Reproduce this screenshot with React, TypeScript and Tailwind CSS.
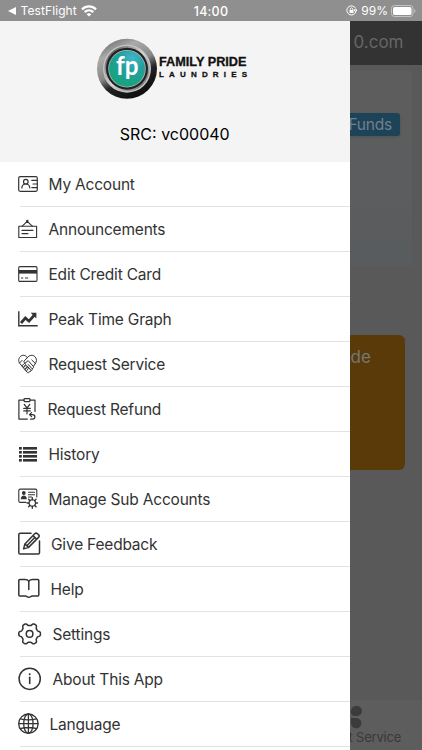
import type { ReactNode } from "react"

// outline of a cog with six soft teeth
const cogPoints = Array.from({ length: 120 }, (_, i) => {
  const a = (i / 120) * Math.PI * 2
  const r = 9.6 + 1.3 * Math.tanh(2 * Math.cos(6 * a))
  return `${(11.6 + r * Math.cos(a)).toFixed(2)},${(11.9 + r * Math.sin(a)).toFixed(2)}`
}).join(" ")

const menuItems: { label: string; text: string; icon: ReactNode }[] = [
  {
    label: "My Account",
    text: "ml-[6.5px]",
    icon: (
      <g strokeWidth="1.2">
        <rect x="0.7" y="4.7" width="18.6" height="14.6" rx="1.5" />
        <circle cx="7.8" cy="9.7" r="2.3" />
        <path d="M3.8 16c.2-2.5 1.8-4 4-4s3.8 1.5 4 4M13.8 8.4h5M15 12h4M13.8 15.6h5" />
      </g>
    ),
  },
  {
    label: "Announcements",
    text: "ml-[6.5px]",
    icon: (
      <g strokeWidth="1.1">
        <rect x="0.8" y="9.3" width="17.8" height="11.2" />
        <path d="M4 9.3l5.2-5 5.4 5M4 13.4h11M4 16.6h6" />
        <circle cx="9.3" cy="4" r="1.2" fill="#333" stroke="none" />
      </g>
    ),
  },
  {
    label: "Edit Credit Card",
    text: "ml-[6.5px]",
    icon: (
      <g>
        <rect x="0.7" y="4.6" width="18.3" height="14.8" rx="1.2" strokeWidth="1.1" />
        <path d="M.7 9.8h18.3" strokeWidth="3.6" strokeLinecap="butt" />
        <path d="M3 16h2.2M7 16h3.2" strokeWidth="1" strokeLinecap="butt" />
      </g>
    ),
  },
  {
    label: "Peak Time Graph",
    text: "ml-[6.5px]",
    icon: (
      <g strokeLinecap="butt" strokeLinejoin="miter">
        <path d="M0.8 4.2v14.6h18.9" strokeWidth="1.4" />
        <path d="M3 16l4.4-5 3.6 3.2 5-5.7" strokeWidth="2.7" />
        <path d="M12.6 5.8h5.8v5.8z" fill="#333" stroke="none" />
      </g>
    ),
  },
  {
    label: "Request Service",
    text: "ml-[6.5px]",
    icon: (
      <g strokeWidth="1">
        <path d="M9.4 5.5C7.5 2.8 4.2 2.5 2.2 4.7.1 7 .3 9.9 2.3 12l7 8.4c.7.9 2 .2 1.8-.8 1 .5 2.1-.3 1.8-1.3 1.1.2 1.9-.8 1.4-1.8 1.1 0 1.7-1.1 1.1-2l1.5-2.4c2-2.2 2.1-5.2.2-7.3-2.1-2.3-5.7-2-7.7.7z" />
        <path d="M9.4 5.5L6 9.2c-.6 1.4.8 2.2 2 1.2l2.2-1.7 5.2 5.8M1.5 11l2.7-2.7M17.5 11.6L13.8 8M3.8 14l2.2-2.3c1-.8 2 .2 1.4 1.2l-2 2.5M5.4 15.7l2.2-2c1-.8 2 .3 1.2 1.3l-1.8 2M7 17.5l2-1.8c1-.7 1.8.3 1.1 1.2l-1.5 2M10.3 12.5l3.5 4M9.5 14.3l3.2 3.7" />
      </g>
    ),
  },
  {
    label: "Request Refund",
    text: "ml-[5.5px]",
    icon: (
      <g strokeWidth="1.2">
        <path d="M6 3.2H.9v18.9h8.5M12 3.2h5v11.2" />
        <rect x="6" y="1.6" width="6" height="3" rx=".8" />
        <path d="M6.3 7.5L9 10.8l2.7-3.3M9 10.8v6M5.7 11.4h6.6M5.7 13.9h6.6" />
        <path d="M12.5 22.1h2c3.2 0 3.2-4.5 0-4.5H12M13.6 15.6l-2.1 2 2.1 2" />
      </g>
    ),
  },
  {
    label: "History",
    text: "ml-[6.5px]",
    icon: (
      <g fill="#333" stroke="none">
        {[5, 9, 13, 17].map((y) => (
          <g key={y}>
            <rect x="1" y={y} width="2.8" height="2.6" />
            <rect x="5" y={y} width="14" height="2.6" />
          </g>
        ))}
      </g>
    ),
  },
  {
    label: "Manage Sub Accounts",
    text: "ml-[6.5px]",
    icon: (
      <g strokeWidth="1.1">
        <path d="M8 15.4H2.2C1.3 15.4.8 15 .8 14V3.6c0-1 .5-1.5 1.5-1.5h15c1 0 1.5.5 1.5 1.5V10M10.5 5.2h6M10.5 7.7h6M10.5 10h3" />
        <circle cx="5.8" cy="6" r="1.9" fill="#333" stroke="none" />
        <path d="M2.8 12.2c0-5 6-5 6 0z" fill="#333" stroke="none" />
        <circle cx="14.3" cy="16" r="3.2" />
        <path d="M14.3 12.8v-2M14.3 19.2v2M11.1 16h-2M17.5 16h2M12 13.7l-1.4-1.4M16.6 13.7l1.4-1.4M12 18.3l-1.4 1.4M16.6 18.3l1.4 1.4" strokeWidth="1.4" />
      </g>
    ),
  },
  {
    label: "Give Feedback",
    text: "ml-[9px]",
    icon: (
      <g strokeWidth="1.5">
        <path d="M13 1.3H2.2C1.3 1.3.8 1.8.8 2.7v18c0 .9.5 1.4 1.4 1.4h17.9c.9 0 1.4-.5 1.4-1.4V9" />
        <path d="M5.6 16.9l1.3-5L16.7 1.8c.8-.8 2-.8 2.8-.1l1 .9c.8.8.8 2 0 2.8l-9.9 10zM6.9 11.9l3.7 3.5M15 3.6l3.8 3.6M8.9 13.7l7.8-8.1" />
      </g>
    ),
  },
  {
    label: "Help",
    text: "ml-[8.5px]",
    icon: (
      <path
        d="M10.8 12.5V4.3C10 3 8.5 2.6 7 2.6H1.8c-.7 0-1 .4-1 1V18c0 .7.3 1 1 1h5.7c1.2 0 1.7 1.2 3.3 1.2s2.1-1.2 3.3-1.2h5.7c.7 0 1-.3 1-1V3.6c0-.6-.3-1-1-1h-5.2c-1.5 0-3 .4-3.8 1.7"
        strokeWidth="1.5"
      />
    ),
  },
  {
    label: "Settings",
    text: "ml-[10.5px]",
    icon: (
      <g strokeWidth="1.5">
        <polygon points={cogPoints} />
        <circle cx="11.6" cy="11.9" r="3.3" />
      </g>
    ),
  },
  {
    label: "About This App",
    text: "ml-[10.5px]",
    icon: (
      <g strokeWidth="1.5">
        <circle cx="11.7" cy="11.8" r="10.6" />
        <path d="M11.7 10.2v6.2" strokeWidth="1.6" />
        <circle cx="11.7" cy="7.3" r="1" fill="#333" stroke="none" />
      </g>
    ),
  },
  {
    label: "Language",
    text: "ml-[7.5px]",
    icon: (
      <g strokeWidth="1.3">
        <circle cx="10.4" cy="11.7" r="9.7" />
        <ellipse cx="10.4" cy="11.7" rx="4.7" ry="9.7" />
        <path d="M10.4 2v19.4M.7 11.7h19.4M2.2 6.8c4.5 1.2 11.9 1.2 16.4 0M2.2 16.6c4.5-1.2 11.9-1.2 16.4 0" />
      </g>
    ),
  },
]

function StatusBar() {
  return (
    <div className="grid h-[21px] shrink-0 grid-cols-[1fr_auto_1fr] items-center bg-[#8f8f8f] text-white">
      <div className="flex items-center pl-[8px]">
        <svg width="8" height="8" viewBox="0 0 8 8" fill="white">
          <path d="M0 4l8-4v8z" />
        </svg>
        <span className="ml-[4.5px] text-[12px] tracking-[0.1px]">TestFlight</span>
        <svg className="ml-[4px]" width="16" height="12" viewBox="0 0 16 12" fill="none" stroke="white" strokeWidth="2.2">
          <path d="M1 4.4c4-4 10-4 14 0M3.7 7.1c2.5-2.4 6.1-2.4 8.6 0" />
          <path d="M8 11.6L5.6 9.2c1.4-1.3 3.4-1.3 4.8 0z" fill="white" stroke="none" />
        </svg>
      </div>
      <span className="pt-[2px] text-[12.5px] leading-4 font-medium tracking-[0.2px]">14:00</span>
      <div className="flex items-center justify-end pr-[6px]">
        <svg width="11" height="11" viewBox="0 0 11 11" fill="none" stroke="white">
          <path d="M9.6 3.5A4.6 4.6 0 1 0 9.9 6.5M8 4.8h3L9.6 6.8z" />
          <rect x="3.5" y="5" width="4" height="3" fill="white" stroke="none" />
          <path d="M4.3 5V4c0-1.6 2.4-1.6 2.4 0v1" strokeWidth=".8" />
        </svg>
        <span className="ml-[4.5px] text-[12px]">99%</span>
        <svg className="ml-[3px]" width="25" height="12" viewBox="0 0 25 12">
          <rect x=".5" y=".5" width="21.5" height="11" rx="3" fill="none" stroke="#c4c4c4" />
          <rect x="2" y="2" width="18.5" height="8" rx="1.7" fill="white" />
          <path d="M23.3 4v4c1.6-.6 1.6-3.4 0-4z" fill="#c4c4c4" />
        </svg>
      </div>
    </div>
  )
}

function Logo() {
  return (
    <svg className="mt-[16px] ml-[95px]" width="156" height="64" viewBox="0 0 156 64">
      <defs>
        <linearGradient id="rim" x1="0" y1="0" x2=".5" y2="1">
          <stop offset="0" stopColor="#555" />
          <stop offset=".3" stopColor="#aaa" />
          <stop offset=".58" stopColor="#888" />
          <stop offset=".75" stopColor="#222" />
          <stop offset="1" stopColor="#111" />
        </linearGradient>
        <linearGradient id="ring" x1="0" y1="0" x2="1" y2="1">
          <stop offset="0" stopColor="#333" />
          <stop offset=".5" stopColor="#ddd" />
          <stop offset="1" stopColor="#555" />
        </linearGradient>
        <radialGradient id="glass" cx=".65" cy=".22" r=".8">
          <stop offset="0" stopColor="#3fb7cb" />
          <stop offset=".45" stopColor="#239f9d" />
          <stop offset="1" stopColor="#16a37c" />
        </radialGradient>
      </defs>
      <circle cx="32" cy="31.7" r="30" fill="url(#rim)" />
      <circle cx="32" cy="31.7" r="24" fill="#c4c4c4" />
      <circle cx="32" cy="31.7" r="22.6" fill="url(#ring)" />
      <circle cx="32" cy="31.7" r="21" fill="#222" />
      <circle cx="32" cy="31.7" r="18.8" fill="#a9b8b8" />
      <circle cx="32" cy="31.7" r="18" fill="url(#glass)" />
      <text x="21" y="38" fontFamily="Lato, sans-serif" fontSize="26" fontWeight="700" fill="#fff" textLength="22.5" lengthAdjust="spacingAndGlyphs">fp</text>
      <g fontFamily="Liberation Sans, sans-serif" fontWeight="700" fill="#111" stroke="#111" strokeWidth=".3">
        <text x="64" y="29.3" fontSize="12.6" textLength="87.5" lengthAdjust="spacingAndGlyphs">FAMILY PRIDE</text>
        <text x="64" y="40" fontSize="8" textLength="88">LAUNDRIES</text>
      </g>
    </svg>
  )
}

function Drawer() {
  return (
    <aside className="w-[349.5px] shrink-0 overflow-hidden bg-white">
      <div className="h-[141px] overflow-hidden bg-[#f4f4f4]">
        <Logo />
        <p className="mt-[20.5px] text-center text-[16px] leading-6 text-black">SRC: vc00040</p>
      </div>
      <ul>
        {menuItems.map((item) => (
          <li key={item.label} className="h-[45px] pl-[18px]">
            <div className="flex h-[44px] items-center">
              <svg className="shrink-0" width="24" height="24" viewBox="0 0 24 24" fill="none" stroke="#333" strokeLinecap="round" strokeLinejoin="round">
                {item.icon}
              </svg>
              <span className={`${item.text} pt-[2px] whitespace-nowrap text-[15.5px] leading-6 tracking-[-0.2px] text-[#333]`}>{item.label}</span>
            </div>
            <div className="ml-[2px] h-px bg-[#e2e2e2]" />
          </li>
        ))}
      </ul>
    </aside>
  )
}

function Backdrop() {
  return (
    <main className="flex min-w-0 flex-1 flex-col overflow-hidden bg-[#595959]">
      <div className="flex h-[44px] shrink-0 items-center bg-[#333] pl-[4px] text-[17px] text-[#666]">0.com</div>
      <div className="mt-[6px] mr-[10px] h-[195px] shrink-0 bg-linear-to-b from-[#5d5d5d] via-[#5c5d5e] to-[#595c5e] pt-[42px]">
        <div className="mr-[12px] flex h-[23px] items-center justify-end rounded-r-[3px] bg-[#1d4358] pt-[1px] pr-[8px] text-[15.5px] tracking-[-0.2px] text-[#71808a] shadow-sm">
          Funds
        </div>
      </div>
      <div className="mt-[69px] mr-[17px] h-[135px] shrink-0 rounded-r-[6px] bg-[#593a08] pt-[10px] pl-[1px] text-[17px] leading-6 text-[#777]">de</div>
      <div className="mt-auto h-[50px] shrink-0 bg-[#5d5d5d] pt-[6px]">
        <svg className="ml-[1px]" width="12" height="23" viewBox="0 0 12 23" fill="#3b3b3b">
          <path d="M0 5a5 5 0 0 1 5-5h1a5 5 0 0 1 0 10H4a4 4 0 0 1-4-4zM0 12h6a5.2 5.2 0 1 1-6 5z" />
        </svg>
        <p className="-ml-[1px] whitespace-nowrap text-[13px] leading-4 tracking-[-0.2px] text-[#393939]">t Service</p>
      </div>
    </main>
  )
}

export default function App() {
  return (
    <div className="flex h-[750px] w-[422px] flex-col overflow-hidden font-['Inter',sans-serif]">
      <StatusBar />
      <div className="flex min-h-0 flex-1">
        <Drawer />
        <Backdrop />
      </div>
    </div>
  )
}
